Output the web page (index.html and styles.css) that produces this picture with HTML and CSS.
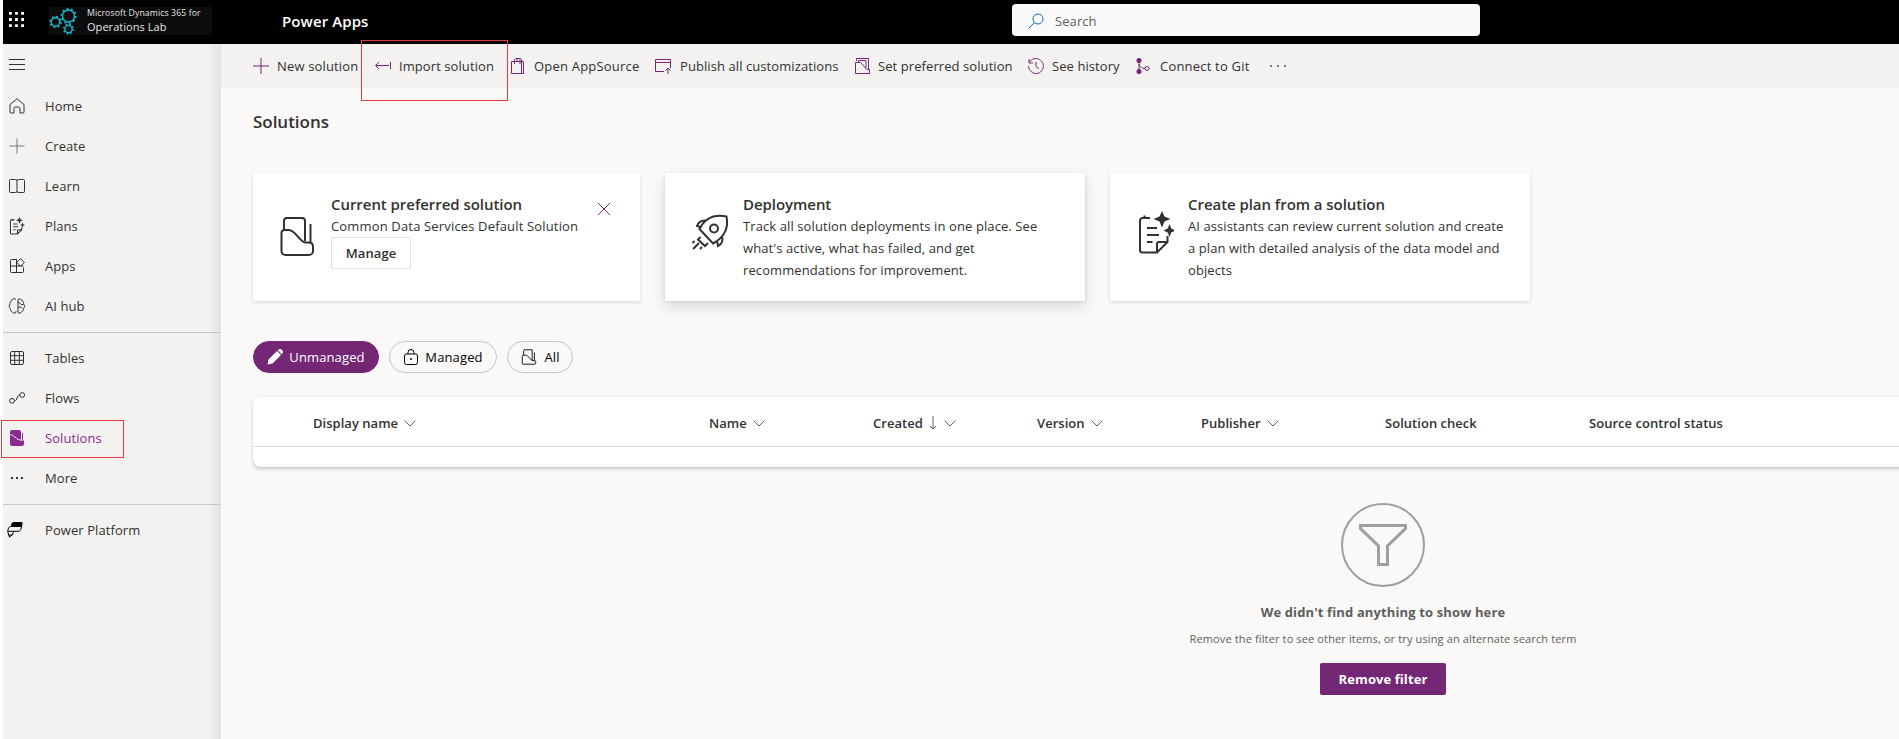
FILE: index.html
```html
<!DOCTYPE html>
<html lang="en">
<head>
<meta charset="utf-8">
<title>Power Apps - Solutions</title>
<link rel="stylesheet" href="styles.css">
</head>
<body>
<svg class="defs" width="0" height="0">
  <symbol id="solution" viewBox="0 0 20 20"><path d="M4 8V3.500A1.500 1.500 0 0 1 5.500 2H13.500V14M4 8H7.500L13.500 14H16a1.500 1.500 0 0 1 1.500 1.500V16.500a1.500 1.500 0 0 1-1.500 1.500H4A1.500 1.500 0 0 1 2.500 16.500V9.500A1.500 1.500 0 0 1 4 8M16 5V14"/></symbol>
  <symbol id="chevron" viewBox="0 0 12 7"><path d="M.5.500 6 6 11.500.500"/></symbol>
  <symbol id="plan" viewBox="0 0 36 44"><path d="M12 7H4.500A2.500 2.500 0 0 0 2 9.500V39a2.500 2.500 0 0 0 2.500 2.500H19L29.500 31V25M6.500 7V4.500M9 17H19M9 24H21M9 31H14.500M19 41V33a2 2 0 0 1 2-2H29"/><path class="solid" d="M24 0 26.500 5.500 32.500 8 26.500 10.500 24 16.500 21.500 10.500 15.500 8 21.500 5.500ZM31.500 13 33.200 17.500 37.500 19.500 33.200 21.500 31.500 26 29.700 21.500 25.500 19.500 29.700 17.500Z"/></symbol>
</svg>
<header class="topbar">
  <svg class="waffle" viewBox="0 0 16 16"><path d="M0 0h3v3H0zM6.500 0h3v3h-3zM13 0h3v3h-3zM0 6.500h3v3H0zM6.500 6.500h3v3h-3zM13 6.500h3v3h-3zM0 13h3v3H0zM6.500 13h3v3h-3zM13 13h3v3h-3z"/></svg>
  <div class="brand">
    <svg class="gears" viewBox="0 0 28 28">
      <g class="ring"><circle cx="19.500" cy="9" r="6"/><circle cx="6.500" cy="15" r="4.300"/><circle cx="19.500" cy="22" r="3.600"/></g>
      <g class="teeth"><circle cx="19.500" cy="9" r="7.300" stroke-dasharray="2 2.587"/><circle cx="6.500" cy="15" r="5.500" stroke-dasharray="1.800 2.520"/><circle cx="19.500" cy="22" r="4.800" stroke-dasharray="1.700 2.070"/></g>
    </svg>
    <div class="brand-text"><span class="brand-small">Microsoft Dynamics 365 for</span><span class="brand-large">Operations Lab</span></div>
  </div>
  <div class="product">Power Apps</div>
  <div class="search"><svg class="i16" viewBox="0 0 16 16"><circle cx="10" cy="6" r="5"/><path d="M6.500 9.500.500 15.500"/></svg><span>Search</span></div>
</header>
<div class="shell">
  <nav class="sidebar">
    <div class="burger"><svg class="i16" viewBox="0 0 16 16"><path d="M0 2.500H16M0 7.500H16M0 12.500H16"/></svg></div>
    <a class="item"><svg class="i16" viewBox="0 0 16 16"><path d="M1 6.500 8 .800 15 6.500V14a1 1 0 0 1-1 1H11V10.500A1.500 1.500 0 0 0 9.500 9H6.500A1.500 1.500 0 0 0 5 10.500V15H2a1 1 0 0 1-1-1Z"/></svg><span>Home</span></a>
    <a class="item"><svg class="i16 light" viewBox="0 0 16 16"><path d="M8 .500V15.500M.500 8H15.500"/></svg><span>Create</span></a>
    <a class="item"><svg class="i16" viewBox="0 0 16 16"><path d="M8 2V14M1.500 1.500H6.500Q8 1.500 8 2.500 8 1.500 9.500 1.500H14.500a1 1 0 0 1 1 1V13.500a1 1 0 0 1-1 1H9.500Q8 14.500 8 13.500 8 14.500 6.500 14.500H1.500a1 1 0 0 1-1-1V2.500a1 1 0 0 1 1-1Z"/></svg><span>Learn</span></a>
    <a class="item"><svg class="plan-small"><use href="#plan"/></svg><span>Plans</span></a>
    <a class="item"><svg class="i16" viewBox="0 0 16 16"><path d="M8 1.500H2.500a1 1 0 0 0-1 1V13.500a1 1 0 0 0 1 1H13.500a1 1 0 0 0 1-1V9.500M1.500 8H14.500M7.500 1.500V14.500M11.500.700 15.300 4.500 11.500 8.200 7.800 4.500Z"/></svg><span>Apps</span></a>
    <a class="item"><svg class="i16" viewBox="0 0 16 16"><path d="M6 .800C4 .300 2.500 1.500 2.500 3 1 3.500.800 5 1.200 6-.200 7-.200 9.500 1.300 10.500 1 12.500 2 13.300 3 13.500 3.500 15.300 5.500 15.500 7 14.500V13M6 .800 7 1.500M9 1.500C11 .200 12.700 1 13 2.800 14.800 3.500 14.800 5 14.500 6 16 7.500 15.800 9.500 14.500 10.500 14.800 12.500 13.500 13.300 12.800 13.500 12 15.500 10 15.500 9 14.500ZM9 4.500C11 4.500 11.500 5.500 12 6.500H14M9 10C10 8.500 12 8.500 13 10.500"/></svg><span>AI hub</span></a>
    <hr>
    <a class="item"><svg class="i16" viewBox="0 0 16 16"><rect x="1.500" y="1.500" width="13" height="13" rx="1.500"/><path d="M5.700 1.500V14.500M10.300 1.500V14.500M1.500 5.700H14.500M1.500 10.300H14.500"/></svg><span>Tables</span></a>
    <a class="item"><svg class="i16" viewBox="0 0 16 16"><circle cx="3" cy="10.800" r="2.400"/><circle cx="13.200" cy="5" r="2.400"/><path d="M5.400 10.800C9 11 7.200 5 10.800 5"/></svg><span>Flows</span></a>
    <a class="item selected"><svg class="i16" viewBox="0 0 16 16"><path class="solid" d="M1 4V2A2 2 0 0 1 3 0H10A2 2 0 0 1 12 2V16H3a2 2 0 0 1-2-2ZM13 2.500 14 4V10.500H15V14a2 2 0 0 1-2 2H11V10H13Z"/><path class="slash" d="M1 4.700C5 4.200 6.500 10.300 13.500 10.300M12.500 1.500V10"/></svg><span>Solutions</span></a>
    <a class="item"><svg class="i16" viewBox="0 0 16 16"><path class="solid" d="M2 7h2v2H2zM7 7h2v2H7zM12 7h2v2h-2z"/></svg><span>More</span></a>
    <hr>
    <a class="item power"><svg class="i16" viewBox="0 0 16 16"><path class="solid" d="M4 4C4 1 5.500 0 7 0H14.500Q16 0 15.500 2L15 4.200H4Z"/><path d="M3.200 4.500H14.600L13.800 7.500Q13 9.300 11 9.300H2Q.200 9.300 1 7.500Q1.500 5 3.200 4.500ZM6.500 9.300 5.500 13H1.500L.800 9M1.800 13 2.500 15.200 5 13"/></svg><span>Power Platform</span></a>
    <div class="annotation mark-solutions"></div>
  </nav>
  <main class="main">
    <div class="commands">
      <a class="cmd c1"><svg class="i16" viewBox="0 0 16 16"><path d="M8 0V16M0 8H16"/></svg><span>New solution</span></a>
      <a class="cmd c2"><svg class="i16" viewBox="0 0 16 16"><path d="M.800 7.500H14M4 4 .500 7.500 4 11M15.500 4V11"/></svg><span>Import solution</span></a>
      <a class="cmd c3"><svg class="i16" viewBox="0 0 16 16"><path d="M1.500 3.500H13.500V15.500H1.500ZM4.500 6V1.500L5.500.500H9L10 1.500V6M7 3V1.500L8 .500H10.500L11.500 1.500V15.500"/></svg><span>Open AppSource</span></a>
      <a class="cmd c4"><svg class="i16" viewBox="0 0 16 16"><path d="M9 13.500H.500V1.500H15.500V10M.500 4.500H15.500M13 16V10M10.500 12.500 13 10 15.500 12.500"/></svg><span>Publish all customizations</span></a>
      <a class="cmd c5"><svg class="i16" viewBox="0 0 16 16"><path d="M2.500 3V.500H14.500V11M1.500 4.500V15.500H15.500V11.500H13L6.500 4.500H1.500M4.500 4V2.500H12V10.500"/></svg><span>Set preferred solution</span></a>
      <a class="cmd c6"><svg class="i16" viewBox="0 0 16 16"><path d="M1 1V5H5M1.500 4.500C3.500.500 8-.500 11.500 1.500 15 3.500 16.500 8 14.500 11.500 12.500 15.500 8 16.500 4.500 14.500 2 13 .500 10.500.500 8M8 4V8.500L11 11"/></svg><span>See history</span></a>
      <a class="cmd c7"><svg class="i16" viewBox="0 0 16 16"><circle class="solid" cx="4" cy="2.500" r="2.500"/><circle class="solid" cx="4" cy="13.500" r="2.500"/><circle cx="12" cy="10.500" r="2"/><path class="thick" d="M4 2.500V13.500M4 6Q5 10.500 10 10.500"/></svg><span>Connect to Git</span></a>
      <svg class="dots" viewBox="0 0 16 16"><path d="M0 7h2v2H0zM7 7h2v2H7zM14 7h2v2h-2z"/></svg>
      <div class="annotation mark-import"></div>
    </div>
    <div class="content">
      <h1>Solutions</h1>
      <section class="cards">
        <article class="card preferred"><svg class="card-icon" viewBox="0 0 36 44"><path d="M4 16V7a3 3 0 0 1 3-3H22a3 3 0 0 1 3 3V27M4 16Q1.500 16.500 1.500 19V37a4 4 0 0 0 4 4H29a4 4 0 0 0 4-4V32a4 4 0 0 0-4-3.500H25C20 28 15 16 9 16H4M30.500 10V28"/></svg>
          <div><h2 class="t1">Current preferred solution</h2><p class="p1">Common Data Services Default Solution</p><button class="manage">Manage</button></div>
          <svg class="close" viewBox="0 0 14 14"><path d="M1 1 13 13M13 1 1 13"/></svg></article>
        <article class="card raised"><svg class="card-icon rocket" viewBox="0 0 36 44"><path d="M7.500 17C13 6 22 2 34.500 4.500 37 17 31 26 21 31.500ZM9 15 5 14Q7 8 14 8.500M25 29 26 34Q32 31 30 24M8.500 25 6 27.500 13 34 16 31M.500 31 2.500 29M1 37 7 31M8 37 10 35"/><circle cx="22" cy="16.500" r="4"/></svg>
          <div><h2 class="t2">Deployment</h2><p class="p2">Track all solution deployments in one place. See<br>what's active, what has failed, and get<br>recommendations for improvement.</p></div></article>
        <article class="card"><svg class="card-icon plan-large"><use href="#plan"/></svg>
          <div><h2 class="t3">Create plan from a solution</h2><p class="p3">AI assistants can review current solution and create<br>a plan with detailed analysis of the data model and<br>objects</p></div></article>
      </section>
      <div class="pills">
        <button class="pill active"><svg class="i16" viewBox="0 0 16 16"><path class="solid" d="M10 2 14 6 5.500 14.500.500 15.500 1.500 10.500ZM11 1Q13-.800 15 1T15 5L14.800 5.200 10.800 1.200Z"/></svg><span>Unmanaged</span></button>
        <button class="pill managed"><svg class="i16" viewBox="0 0 16 16"><rect x="1.500" y="5" width="13" height="10.500" rx="2"/><path d="M5 5V3.500a3 3 0 0 1 6 0V5"/><circle class="solid" cx="8" cy="10" r="1"/></svg><span>Managed</span></button>
        <button class="pill all"><svg class="i18"><use href="#solution"/></svg><span>All</span></button>
      </div>
      <section class="table">
        <div class="thead">
          <div class="th"><span>Display name</span><svg class="chev"><use href="#chevron"/></svg></div>
          <div class="th"><span>Name</span><svg class="chev"><use href="#chevron"/></svg></div>
          <div class="th"><span>Created</span><svg class="sort" viewBox="0 0 8 14"><path d="M4 0V13M1 10 4 13 7 10"/></svg><svg class="chev"><use href="#chevron"/></svg></div>
          <div class="th"><span>Version</span><svg class="chev"><use href="#chevron"/></svg></div>
          <div class="th"><span>Publisher</span><svg class="chev"><use href="#chevron"/></svg></div>
          <div class="th"><span>Solution check</span></div>
          <div class="th"><span>Source control status</span></div>
        </div>
      </section>
      <section class="empty">
        <div class="circle"><svg viewBox="0 0 48 42"><path d="M1.500 1.500H46.500V4.500L28.500 22V40.500H19.500V22L1.500 4.500Z"/></svg></div>
        <h3>We didn't find anything to show here</h3>
        <p>Remove the filter to see other items, or try using an alternate search term</p>
        <button>Remove filter</button>
      </section>
    </div>
  </main>
</div>
</body>
</html>
```
FILE: styles.css
```css
* { box-sizing: border-box; }
html { height: 739px; overflow: hidden; }
body { margin: 0; padding-left: 3px; width: 1899px; height: 739px; overflow: hidden; background: #fff; color: #323130; font: 13px/20px "Open Sans", "Noto Sans", sans-serif; letter-spacing: .08px; white-space: nowrap; }
svg { fill: none; stroke: currentColor; stroke-width: 1; flex: none; overflow: visible; }
button { font: inherit; color: inherit; letter-spacing: inherit; padding: 0; }
h1, h2, h3, p { margin: 0; }
.defs { display: block; position: absolute; }
.i16 { width: 16px; height: 16px; }
.i18 { width: 18px; height: 18px; }
.solid { fill: currentColor; stroke: none; }

.topbar { height: 44px; background: #000; color: #fff; display: flex; padding-left: 6px; }
.waffle { width: 15px; height: 15px; margin-top: 12px; fill: #fff; stroke: none; }
.brand { display: flex; width: 163px; height: 28px; margin: 7px 0 0 25px; background: #0c0c0c; }
.gears { width: 28px; height: 28px; color: #14b9cf; }
.ring { stroke-width: 1.4; }
.teeth { stroke-width: 1.5; }
.brand-text { display: flex; flex-direction: column; padding-left: 10px; color: #e6e6e6; }
.brand-small { font-size: 8.7px; line-height: 13px; letter-spacing: .1px; }
.brand-large { font-size: 11px; line-height: 14px; letter-spacing: .05px; }
.product { margin-left: 70px; width: 730px; font-size: 15px; font-weight: 600; line-height: 42px; letter-spacing: .1px; }
.search { width: 468px; height: 32px; margin-top: 4px; border-radius: 4px; background: #fafafa; display: flex; align-items: center; gap: 11px; padding: 1px 0 0 16px; color: #605e5c; }
.search svg { color: #0f6cbd; }

.shell { display: flex; height: 695px; }
.sidebar { position: relative; width: 218px; flex: none; background: linear-gradient(to right, #f3f2f1 205px, #e4e3e2 218px); padding-top: 42px; }
.burger { height: 0; }
.burger svg { display: block; position: relative; left: 6px; top: -29px; }
.item { display: flex; align-items: center; height: 40px; padding-left: 6px; gap: 20px; }
.light { color: #797775; }
.sidebar hr { margin: 6px 0 5px; height: 1px; border: 0; background: #c8c6c4; }
.plan-small { width: 16px; height: 18px; stroke-width: 2.5; }
.selected { color: #8b2a90; }
.slash { stroke: #f3f2f1; }
.power { color: #000; padding-left: 4px; gap: 22px; }
.power span { color: #323130; }
.annotation { position: absolute; border: 1px solid #e33b3b; }
.mark-solutions { left: -2px; top: 376px; width: 123px; height: 38px; }
.mark-import { left: 140px; top: -4px; width: 147px; height: 61px; }

.main { width: 1678px; background: #faf9f8; }
.commands { position: relative; display: flex; height: 44px; padding-left: 32px; background: #f3f2f1; }
.cmd { display: flex; align-items: center; gap: 8px; }
.cmd svg, .close { color: #742774; }
.c1 { width: 122px; }
.c1 span { letter-spacing: .15px; }
.c2 { width: 135px; }
.c3 { width: 145px; letter-spacing: .2px; }
.c4 { width: 199px; gap: 9px; }
.c5 { width: 174px; }
.c6 { width: 107px; }
.c7 { width: 135px; gap: 9px; letter-spacing: .2px; }
.dots { width: 16px; fill: #797775; stroke: none; }
.content { padding-left: 32px; overflow: hidden; }
h1 { height: 85px; padding-top: 24px; font-size: 17px; line-height: 20px; font-weight: 600; letter-spacing: -.03px; }
.cards { display: grid; grid-template-columns: 387px 420px 420px; gap: 25px; height: 128px; }
.card { display: flex; padding: 20px 0 0 27px; background: #fff; box-shadow: 0 1.6px 3.6px rgba(0,0,0,.13), 0 .3px .9px rgba(0,0,0,.1); position: relative; }
.raised { box-shadow: 0 6.4px 14.4px rgba(0,0,0,.13), 0 1.2px 3.6px rgba(0,0,0,.1); }
.card-icon { width: 36px; height: 44px; margin: 21px 15px 0 0; stroke-width: 2; }
.rocket { margin-top: 19px; }
.card h2 { font-size: 15px; line-height: 22px; font-weight: 600; letter-spacing: -.05px; }
.card p { line-height: 22px; }
.card .p1 { letter-spacing: .16px; }
.card .p2 { letter-spacing: .1px; }
.plan-large { margin: 18px 14px 0 1px; }
.manage { display: block; width: 80px; height: 32px; background: #fff; border: 1px solid #e1dfdd; border-radius: 2px; font-weight: 600; }
.close { position: absolute; width: 14px; height: 14px; left: 344px; top: 29px; }
.pills { display: flex; gap: 10px; height: 32px; margin-top: 40px; }
.pill { display: flex; align-items: center; justify-content: center; gap: 6px; height: 32px; border: 1px solid #c8c6c4; border-radius: 16px; background: transparent; color: #000; letter-spacing: .12px; }
.active { width: 126px; background: #742774; border-color: #742774; color: #fff; }
.managed { width: 108px; }
.all { width: 66px; }
.table { width: 2260px; height: 70px; margin-top: 24px; background: #fff; border-radius: 8px; box-shadow: 0 1.6px 3.6px rgba(0,0,0,.2); }
.thead { display: grid; grid-template-columns: 396px 164px 164px 164px 184px 204px 300px; height: 50px; padding: 3px 0 0 60px; border-bottom: 1px solid #e1dfdd; }
.th { display: flex; align-items: center; gap: 6px; font-weight: 600; letter-spacing: .03px; }
.chev { width: 12px; height: 7px; color: #605e5c; }
.sort { width: 8px; height: 14px; margin-right: 1px; color: #605e5c; }
.empty { display: flex; flex-direction: column; align-items: center; width: 2260px; padding-top: 36px; color: #605e5c; }
.circle { display: flex; justify-content: center; width: 84px; height: 84px; border: 2px solid #a19f9d; border-radius: 50%; color: #a19f9d; padding-top: 19px; }
.circle svg { width: 48px; height: 42px; stroke-width: 3; }
.empty h3 { margin-top: 15px; font-size: 13px; font-weight: 700; letter-spacing: .13px; }
.empty p { margin-top: 7px; font-size: 11px; letter-spacing: .13px; }
.empty button { width: 126px; height: 32px; margin-top: 14px; border: 0; border-radius: 2px; background: #742774; color: #fff; font-weight: 700; }
```
